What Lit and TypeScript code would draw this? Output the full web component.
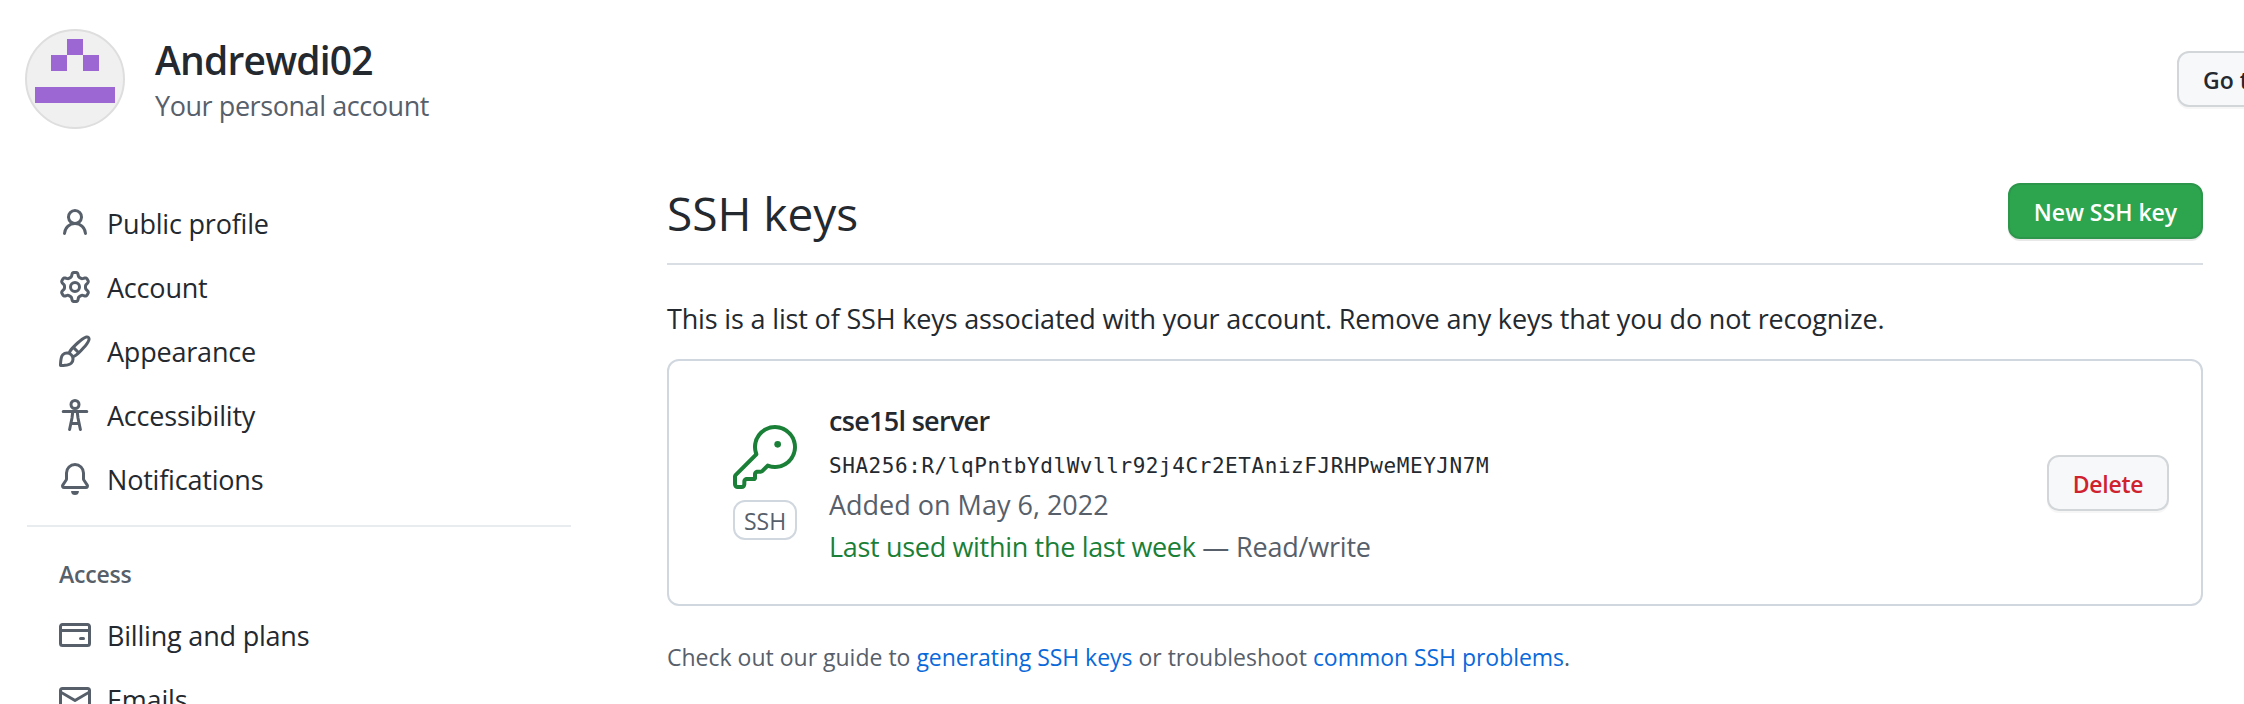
import { LitElement, html, css, svg } from "lit";
import { customElement, property } from "lit/decorators.js";

const paths: Record<string, string[]> = {
  person: [
    "M10.5 5a2.5 2.5 0 11-5 0 2.5 2.5 0 015 0zm.061 3.073a4 4 0 10-5.123 0 6.004 6.004 0 00-3.431 5.142.75.75 0 001.498.07 4.5 4.5 0 018.99 0 .75.75 0 101.498-.07 6.005 6.005 0 00-3.432-5.142z",
  ],
  gear: [
    "M7.429 1.525a6.593 6.593 0 011.142 0c.036.003.108.036.137.146l.289 1.105c.147.56.55.967.997 1.189.174.086.341.183.501.29.417.278.97.423 1.53.27l1.102-.303c.11-.03.175.016.195.046.219.31.41.641.573.989.014.031.022.11-.059.19l-.815.806c-.411.406-.562.957-.53 1.456a4.588 4.588 0 010 .582c-.032.499.119 1.05.53 1.456l.815.806c.08.08.073.159.059.19a6.494 6.494 0 01-.573.99c-.02.029-.086.074-.195.045l-1.103-.303c-.559-.153-1.112-.008-1.529.27-.16.107-.327.204-.5.29-.449.222-.851.628-.998 1.189l-.289 1.105c-.029.11-.101.143-.137.146a6.613 6.613 0 01-1.142 0c-.036-.003-.108-.037-.137-.146l-.289-1.105c-.147-.56-.55-.967-.997-1.189a4.502 4.502 0 01-.501-.29c-.417-.278-.97-.423-1.53-.27l-1.102.303c-.11.03-.175-.016-.195-.046a6.492 6.492 0 01-.573-.989c-.014-.031-.022-.11.059-.19l.815-.806c.411-.406.562-.957.53-1.456a4.587 4.587 0 010-.582c.032-.499-.119-1.05-.53-1.456l-.815-.806c-.08-.08-.073-.159-.059-.19a6.44 6.44 0 01.573-.99c.02-.029.086-.075.195-.045l1.103.303c.559.153 1.112.008 1.529-.27.16-.107.327-.204.5-.29.449-.222.851-.628.998-1.189l.289-1.105c.029-.11.101-.143.137-.146zM8 0c-.236 0-.47.01-.701.03-.743.065-1.29.615-1.458 1.261l-.29 1.106c-.017.066-.078.158-.211.224a5.994 5.994 0 00-.668.386c-.123.082-.233.09-.3.071L3.27 2.776c-.644-.177-1.392.02-1.82.63a7.977 7.977 0 00-.704 1.217c-.315.675-.111 1.422.363 1.891l.815.806c.05.048.098.147.088.294a6.084 6.084 0 000 .772c.01.147-.038.246-.088.294l-.815.806c-.474.469-.678 1.216-.363 1.891.2.428.436.835.704 1.218.428.609 1.176.806 1.82.63l1.103-.303c.066-.019.176-.011.299.071.213.143.436.272.668.386.133.066.194.158.212.224l.289 1.106c.169.646.715 1.196 1.458 1.26a8.094 8.094 0 001.402 0c.743-.064 1.29-.614 1.458-1.26l.29-1.106c.017-.066.078-.158.211-.224a5.98 5.98 0 00.668-.386c.123-.082.233-.09.3-.071l1.102.302c.644.177 1.392-.02 1.82-.63.268-.382.505-.789.704-1.217.315-.675.111-1.422-.364-1.891l-.814-.806c-.05-.048-.098-.147-.088-.294a6.1 6.1 0 000-.772c-.01-.147.039-.246.088-.294l.814-.806c.475-.469.679-1.216.364-1.891a7.992 7.992 0 00-.704-1.218c-.428-.609-1.176-.806-1.82-.63l-1.103.303c-.066.019-.176.011-.299-.071a5.991 5.991 0 00-.668-.386c-.133-.066-.194-.158-.212-.224L10.16 1.29C9.99.645 9.444.095 8.701.031A8.094 8.094 0 008 0zm1.5 8a1.5 1.5 0 11-3 0 1.5 1.5 0 013 0zM11 8a3 3 0 11-6 0 3 3 0 016 0z",
  ],
  brush: [
    "M11.134 1.535C9.722 2.562 8.16 4.057 6.889 5.312 5.8 6.387 5.041 7.401 4.575 8.294a3.745 3.745 0 00-3.227 1.054c-.43.431-.69 1.066-.86 1.657a11.982 11.982 0 00-.358 1.914A21.263 21.263 0 000 15.203v.054l.75-.007-.007.75h.054a14.404 14.404 0 00.654-.012 21.243 21.243 0 001.63-.118c.62-.07 1.3-.18 1.914-.357.592-.17 1.226-.43 1.657-.861a3.745 3.745 0 001.055-3.217c.908-.461 1.942-1.216 3.04-2.3 1.279-1.262 2.764-2.825 3.775-4.249.501-.706.923-1.428 1.125-2.096.2-.659.235-1.469-.368-2.07-.606-.607-1.42-.55-2.069-.34-.66.213-1.376.646-2.076 1.155zm-3.95 8.48a3.76 3.76 0 00-1.19-1.192 9.758 9.758 0 011.161-1.607l1.658 1.658a9.853 9.853 0 01-1.63 1.142zM.742 16l.007-.75-.75.008A.75.75 0 00.743 16zM12.016 2.749c-1.224.89-2.605 2.189-3.822 3.384l1.718 1.718c1.21-1.205 2.51-2.597 3.387-3.833.47-.662.78-1.227.912-1.662.134-.444.032-.551.009-.575h-.001V1.78c-.014-.014-.112-.113-.548.027-.432.14-.995.462-1.655.942zM1.62 13.089a19.56 19.56 0 00-.104 1.395 19.55 19.55 0 001.396-.104 10.528 10.528 0 001.668-.309c.526-.151.856-.325 1.011-.48a2.25 2.25 0 00-3.182-3.182c-.155.155-.329.485-.48 1.01a10.515 10.515 0 00-.309 1.67z",
  ],
  bell: [
    "M8 16a2 2 0 001.985-1.75c.017-.137-.097-.25-.235-.25h-3.5c-.138 0-.252.113-.235.25A2 2 0 008 16z",
    "M8 1.5A3.5 3.5 0 004.5 5v2.947c0 .346-.102.683-.294.97l-1.703 2.556a.018.018 0 00-.003.01l.001.006c0 .002.002.004.004.006a.017.017 0 00.006.004l.007.001h10.964l.007-.001a.016.016 0 00.006-.004.016.016 0 00.004-.006l.001-.007a.017.017 0 00-.003-.01l-1.703-2.554a1.75 1.75 0 01-.294-.97V5A3.5 3.5 0 008 1.5zM3 5a5 5 0 0110 0v2.947c0 .05.015.098.042.139l1.703 2.555A1.518 1.518 0 0113.482 13H2.518a1.518 1.518 0 01-1.263-2.36l1.703-2.554A.25.25 0 003 7.947V5z",
  ],
  card: [
    "M10.75 9a.75.75 0 000 1.5h1.5a.75.75 0 000-1.5h-1.5z",
    "M0 3.75C0 2.784.784 2 1.75 2h12.5c.966 0 1.75.784 1.75 1.75v8.5A1.75 1.75 0 0114.25 14H1.75A1.75 1.75 0 010 12.25v-8.5zm14.5 0V5h-13V3.75a.25.25 0 01.25-.25h12.5a.25.25 0 01.25.25zm0 2.75h-13v5.75c0 .138.112.25.25.25h12.5a.25.25 0 00.25-.25V6.5z",
  ],
  mail: [
    "M1.75 2A1.75 1.75 0 000 3.75v.736a.75.75 0 000 .027v7.737C0 13.216.784 14 1.75 14h12.5A1.75 1.75 0 0016 12.25v-8.5A1.75 1.75 0 0014.25 2H1.75zM14.5 4.07v-.32a.25.25 0 00-.25-.25H1.75a.25.25 0 00-.25.25v.32L8 7.88l6.5-3.81zm-13 1.74v6.441c0 .138.112.25.25.25h12.5a.25.25 0 00.25-.25V5.809L8.38 9.397a.75.75 0 01-.76 0L1.5 5.809z",
  ],
};

@customElement("nav-item")
class NavItem extends LitElement {
  @property() icon = "";
  @property() label = "";

  static styles = css`
    :host {
      display: flex;
      align-items: center;
      height: 64px;
      padding-left: 32px;
      gap: 16px;
      color: #24292f;
      font-size: 27px;
      letter-spacing: -0.2px;
      line-height: 42px;
      white-space: nowrap;
    }
    .icon {
      width: 32px;
      height: 32px;
      fill: #57606a;
      fill-rule: evenodd;
    }
    .label {
      padding-top: 2px;
    }
    .line {
      fill: none;
      stroke: #57606a;
      stroke-width: 1.5;
      stroke-linecap: round;
      stroke-linejoin: round;
    }
  `;

  render() {
    return html`
      <svg class="icon" viewBox="0 0 16 16">
        ${this.icon === "accessibility"
          ? svg`<circle class="line" cx="8" cy="2.75" r="2" />
              <path class="line" d="M2.1 6.25h11.8M6.9 6.25L6.5 9.5 5.3 15.25M9.1 6.25L9.5 9.5l1.2 5.75M6 12.25h4" />`
          : paths[this.icon].map((d) => svg`<path d=${d} />`)}
      </svg>
      <span class="label">${this.label}</span>
    `;
  }
}

@customElement("app-root")
class AppRoot extends LitElement {
  static styles = css`
    :host {
      display: block;
      height: 704px;
      overflow: hidden;
      background: #fff;
      color: #24292f;
      font-family: "Open Sans", "Noto Sans", sans-serif;
      font-size: 27px;
      line-height: 42px;
      white-space: nowrap;
    }
    .header {
      display: flex;
      padding: 29px 0 0 25px;
      height: 100px;
    }
    .avatar {
      flex: none;
      width: 100px;
      height: 100px;
      margin-right: 30px;
    }
    .who {
      flex: 0 0 2022px;
      padding-top: 4px;
    }
    .name {
      font-size: 39px;
      font-weight: 600;
      line-height: 54px;
      letter-spacing: -0.8px;
    }
    .sub {
      line-height: 37px;
      letter-spacing: -0.43px;
      color: #57606a;
    }
    .btn {
      flex: none;
      box-sizing: border-box;
      height: 56px;
      padding: 2px 24px 0;
      border: 2px solid #d3d6d9;
      border-radius: 12px;
      background: #f6f8fa;
      box-shadow: 0 2px 0 rgba(27, 31, 36, 0.04);
      font-size: 23px;
      font-weight: 600;
      line-height: 50px;
      text-align: center;
    }
    .goto {
      margin-top: 22px;
    }
    .new {
      width: 195px;
      padding-inline: 0;
      background: #2da44e;
      border-color: #2c974b;
      color: #fff;
      letter-spacing: 0;
      box-shadow: 0 2px 0 rgba(27, 31, 36, 0.1);
    }
    .delete {
      width: 122px;
      padding-inline: 0;
      margin-left: auto;
      color: #cf222e;
      letter-spacing: -0.25px;
    }
    .layout {
      display: grid;
      grid-template-columns: 544px 1536px;
      column-gap: 96px;
      padding: 54px 0 0 27px;
    }
    .nav {
      padding-top: 8px;
    }
    .divider {
      height: 2px;
      margin-top: 14px;
      background: #e8ecef;
    }
    .group {
      padding: 29px 0 11px 32px;
      font-size: 23px;
      font-weight: 600;
      line-height: 36px;
      letter-spacing: -0.2px;
      color: #57606a;
    }
    .heading {
      display: flex;
      justify-content: space-between;
      height: 80px;
      border-bottom: 2px solid #d8dee4;
    }
    .title {
      margin: 0;
      font-size: 46px;
      font-weight: 400;
      line-height: 60px;
    }
    .intro {
      margin: 33px 0 19px;
      letter-spacing: -0.16px;
    }
    .box {
      display: flex;
      align-items: center;
      box-sizing: border-box;
      height: 247px;
      padding: 0 32px 0 64px;
      border: 2px solid #d0d7de;
      border-radius: 12px;
    }
    .badge-col {
      width: 64px;
      margin-right: 32px;
    }
    .key {
      display: block;
      width: 64px;
      height: 64px;
      fill: #1a7f37;
    }
    .badge {
      box-sizing: border-box;
      height: 40px;
      margin-top: 11px;
      padding-top: 1px;
      border: 2px solid #d0d7de;
      border-radius: 12px;
      font-size: 23px;
      line-height: 36px;
      text-align: center;
      color: #57606a;
    }
    .details {
      padding-top: 3px;
    }
    .key-name {
      font-weight: 600;
      letter-spacing: -0.7px;
    }
    .hash {
      padding-top: 7px;
      font-family: "DejaVu Sans Mono", monospace;
      font-size: 21px;
      line-height: 35px;
      letter-spacing: 0.56px;
    }
    .muted {
      color: #57606a;
    }
    .used {
      color: #57606a;
      letter-spacing: -0.2px;
    }
    .green {
      color: #1a7f37;
      letter-spacing: -0.32px;
    }
    .foot {
      margin: 33px 0 0;
      font-size: 23px;
      line-height: 36px;
      color: #57606a;
    }
    .link {
      color: #0969da;
      letter-spacing: -0.04px;
    }
  `;

  render() {
    return html`
      <header class="header">
        <svg class="avatar" viewBox="0 0 100 100">
          <circle cx="50" cy="50" r="49" fill="#f0f0f0" stroke="#dedede" stroke-width="2" />
          <path fill="#9d67d3" d="M42 10h16v16H42zM26 26h16v16H26zM58 26h16v16H58zM10 58h80v16H10z" />
        </svg>
        <div class="who">
          <div class="name">Andrewdi02</div>
          <div class="sub">Your personal account</div>
        </div>
        <div class="btn goto">Go to your personal profile</div>
      </header>
      <div class="layout">
        <nav class="nav">
          <nav-item icon="person" label="Public profile"></nav-item>
          <nav-item icon="gear" label="Account"></nav-item>
          <nav-item icon="brush" label="Appearance"></nav-item>
          <nav-item icon="accessibility" label="Accessibility"></nav-item>
          <nav-item icon="bell" label="Notifications"></nav-item>
          <div class="divider"></div>
          <div class="group">Access</div>
          <nav-item icon="card" label="Billing and plans"></nav-item>
          <nav-item icon="mail" label="Emails"></nav-item>
        </nav>
        <main>
          <div class="heading">
            <h2 class="title">SSH keys</h2>
            <div class="btn new">New SSH key</div>
          </div>
          <p class="intro">This is a list of SSH keys associated with your account. Remove any keys that you do not recognize.</p>
          <div class="box">
            <div class="badge-col">
              <svg class="key" viewBox="0 0 24 24">
                <path d="M16.75 8.5a1.25 1.25 0 1 0 0-2.5 1.25 1.25 0 0 0 0 2.5Z" />
                <path
                  d="M15.75 0a8.25 8.25 0 1 1-2.541 16.101l-1.636 1.636a1.744 1.744 0 0 1-1.237.513H9.25a.25.25 0 0 0-.25.25v1.448a.876.876 0 0 1-.256.619l-.214.213a.75.75 0 0 1-.545.22H5.25a.25.25 0 0 0-.25.25v1A1.75 1.75 0 0 1 3.25 24h-1.5A1.75 1.75 0 0 1 0 22.25v-2.836c0-.464.185-.908.513-1.236l7.387-7.388A8.249 8.249 0 0 1 15.75 0ZM9 8.25a6.733 6.733 0 0 0 .463 2.462.75.75 0 0 1-.168.804l-7.722 7.721a.25.25 0 0 0-.073.177v2.836c0 .138.112.25.25.25h1.5a.25.25 0 0 0 .25-.25v-1c0-.966.784-1.75 1.75-1.75H7.5v-1c0-.966.784-1.75 1.75-1.75h1.086a.25.25 0 0 0 .177-.073l1.971-1.972a.75.75 0 0 1 .804-.168A6.75 6.75 0 1 0 9 8.25Z"
                />
              </svg>
              <div class="badge">SSH</div>
            </div>
            <div class="details">
              <div class="key-name">cse15l server</div>
              <div class="hash">SHA256:R/lqPntbYdlWvllr92j4Cr2ETAnizFJRHPweMEYJN7M</div>
              <div class="muted">Added on May 6, 2022</div>
              <div class="used"><span class="green">Last used within the last week</span> — Read/write</div>
            </div>
            <div class="btn delete">Delete</div>
          </div>
          <p class="foot">
            Check out our guide to <span class="link">generating SSH keys</span> or troubleshoot
            <span class="link">common SSH problems</span>.
          </p>
        </main>
      </div>
    `;
  }
}
